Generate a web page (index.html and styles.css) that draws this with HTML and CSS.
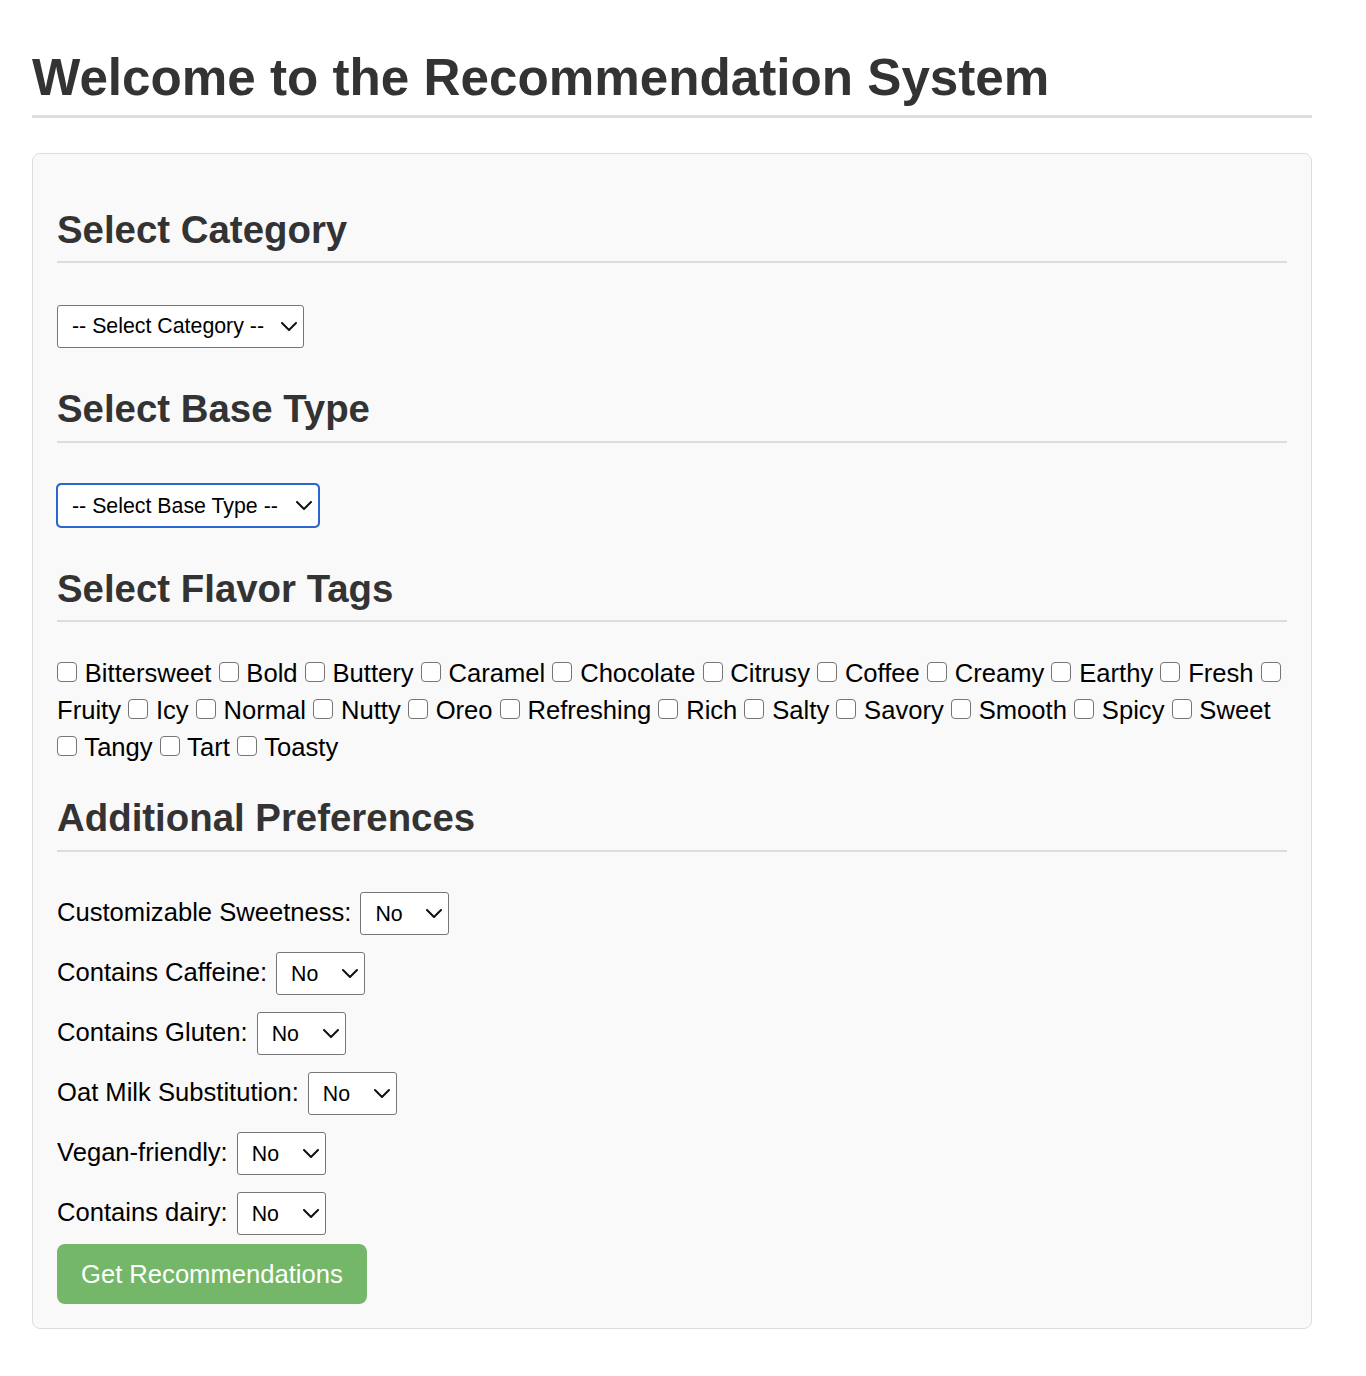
FILE: index.html
```html
<!DOCTYPE html>
<html lang="en">
<head>
<meta charset="utf-8">
<title>Recommendation System</title>
<link rel="stylesheet" href="styles.css">
</head>
<body>
<main class="page">
<h1 class="title">Welcome to the Recommendation System</h1>
<form class="panel">
  <h2 class="section-title">Select Category</h2>
  <div class="field">
    <span class="select-wrap">
      <select class="select select-category"><option>-- Select Category --</option></select>
      <svg class="chevron" viewBox="0 0 16 9" aria-hidden="true"><polyline points="1,1 8,8 15,1"/></svg>
    </span>
  </div>

  <h2 class="section-title">Select Base Type</h2>
  <div class="field">
    <span class="select-wrap is-focused">
      <select class="select select-base"><option>-- Select Base Type --</option></select>
      <svg class="chevron" viewBox="0 0 16 9" aria-hidden="true"><polyline points="1,1 8,8 15,1"/></svg>
    </span>
  </div>

  <h2 class="section-title">Select Flavor Tags</h2>
  <div class="tags">
    <label class="tag"><input type="checkbox" class="check"> Bittersweet</label>
    <label class="tag"><input type="checkbox" class="check"> Bold</label>
    <label class="tag"><input type="checkbox" class="check"> Buttery</label>
    <label class="tag"><input type="checkbox" class="check"> Caramel</label>
    <label class="tag"><input type="checkbox" class="check"> Chocolate</label>
    <label class="tag"><input type="checkbox" class="check"> Citrusy</label>
    <label class="tag"><input type="checkbox" class="check"> Coffee</label>
    <label class="tag"><input type="checkbox" class="check"> Creamy</label>
    <label class="tag"><input type="checkbox" class="check"> Earthy</label>
    <label class="tag"><input type="checkbox" class="check"> Fresh</label>
    <label class="tag"><input type="checkbox" class="check"> Fruity</label>
    <label class="tag"><input type="checkbox" class="check"> Icy</label>
    <label class="tag"><input type="checkbox" class="check"> Normal</label>
    <label class="tag"><input type="checkbox" class="check"> Nutty</label>
    <label class="tag"><input type="checkbox" class="check"> Oreo</label>
    <label class="tag"><input type="checkbox" class="check"> Refreshing</label>
    <label class="tag"><input type="checkbox" class="check"> Rich</label>
    <label class="tag"><input type="checkbox" class="check"> Salty</label>
    <label class="tag"><input type="checkbox" class="check"> Savory</label>
    <label class="tag"><input type="checkbox" class="check"> Smooth</label>
    <label class="tag"><input type="checkbox" class="check"> Spicy</label>
    <label class="tag"><input type="checkbox" class="check"> Sweet</label>
    <label class="tag"><input type="checkbox" class="check"> Tangy</label>
    <label class="tag"><input type="checkbox" class="check"> Tart</label>
    <label class="tag"><input type="checkbox" class="check"> Toasty</label>
  </div>

  <h2 class="section-title">Additional Preferences</h2>
  <div class="pref">
    <label class="pref-label">Customizable Sweetness:</label>
    <span class="select-wrap">
      <select class="select select-yn"><option>No</option><option>Yes</option></select>
      <svg class="chevron" viewBox="0 0 16 9" aria-hidden="true"><polyline points="1,1 8,8 15,1"/></svg>
    </span>
  </div>
  <div class="pref">
    <label class="pref-label">Contains Caffeine:</label>
    <span class="select-wrap">
      <select class="select select-yn"><option>No</option><option>Yes</option></select>
      <svg class="chevron" viewBox="0 0 16 9" aria-hidden="true"><polyline points="1,1 8,8 15,1"/></svg>
    </span>
  </div>
  <div class="pref">
    <label class="pref-label">Contains Gluten:</label>
    <span class="select-wrap">
      <select class="select select-yn"><option>No</option><option>Yes</option></select>
      <svg class="chevron" viewBox="0 0 16 9" aria-hidden="true"><polyline points="1,1 8,8 15,1"/></svg>
    </span>
  </div>
  <div class="pref">
    <label class="pref-label">Oat Milk Substitution:</label>
    <span class="select-wrap">
      <select class="select select-yn"><option>No</option><option>Yes</option></select>
      <svg class="chevron" viewBox="0 0 16 9" aria-hidden="true"><polyline points="1,1 8,8 15,1"/></svg>
    </span>
  </div>
  <div class="pref">
    <label class="pref-label">Vegan-friendly:</label>
    <span class="select-wrap">
      <select class="select select-yn"><option>No</option><option>Yes</option></select>
      <svg class="chevron" viewBox="0 0 16 9" aria-hidden="true"><polyline points="1,1 8,8 15,1"/></svg>
    </span>
  </div>
  <div class="pref">
    <label class="pref-label">Contains dairy:</label>
    <span class="select-wrap">
      <select class="select select-yn"><option>No</option><option>Yes</option></select>
      <svg class="chevron" viewBox="0 0 16 9" aria-hidden="true"><polyline points="1,1 8,8 15,1"/></svg>
    </span>
  </div>

  <button type="button" class="submit">Get Recommendations</button>
</form>
</main>
</body>
</html>
```

FILE: styles.css
```css
html {
  background: #ffffff;
}

body {
  margin: 0;
  padding: 13.5px 32px 40px;
  background: #ffffff;
  font-family: Arial, "Liberation Sans", Helvetica, sans-serif;
  font-size: 25.6px;
  color: #000;
}

.page {
  display: block;
  max-width: 1280px;
}

.title {
  margin: 34.3px 0 35px;
  padding-bottom: 8px;
  border-bottom: 3px solid #ddd;
  font-size: 51.2px;
  font-weight: bold;
  line-height: normal;
  color: #333;
}

.panel {
  margin: 0;
  padding: 24px;
  background: #f9f9f9;
  border: 1px solid #ddd;
  border-radius: 8px;
}

.section-title {
  margin: 30px 0 32px;
  padding-bottom: 9.5px;
  border-bottom: 2px solid #ddd;
  font-size: 38.4px;
  font-weight: bold;
  line-height: normal;
  color: #333;
}

.field {
  display: flex;
}

.select-wrap {
  position: relative;
  display: inline-block;
  margin: 9.5px 0;
}

.select {
  -webkit-appearance: none;
  appearance: none;
  display: block;
  box-sizing: border-box;
  height: 43px;
  margin: 0;
  padding: 0 30px 0 14px;
  background: #fff;
  border: 1px solid #767676;
  border-radius: 3px;
  font-family: Arial, "Liberation Sans", Helvetica, sans-serif;
  font-size: 21.33px;
  color: #000;
  outline: none;
}

.select-category {
  width: 247px;
}

.select-base {
  width: 262px;
}

.select-yn {
  width: 89px;
}

.is-focused .select {
  outline: 2px solid #2a67d3;
  outline-offset: -1px;
  border-radius: 4px;
}

.chevron {
  position: absolute;
  right: 7px;
  top: 50%;
  width: 16px;
  height: 9px;
  margin-top: -4.5px;
  fill: none;
  stroke: #111;
  stroke-width: 2;
  stroke-linecap: round;
  stroke-linejoin: round;
  pointer-events: none;
}

.tags {
  margin-top: 33px;
  line-height: 37px;
}

.check {
  -webkit-appearance: none;
  appearance: none;
  box-sizing: border-box;
  width: 20px;
  height: 20px;
  margin: 0 0.7px 0 0;
  vertical-align: baseline;
  background: #fff;
  border: 1px solid #767676;
  border-radius: 4px;
}

.pref {
  display: flex;
  align-items: baseline;
  gap: 9px;
}

.pref .select-wrap {
  margin: 8.5px 0;
}

.pref-label {
  line-height: normal;
}

.submit {
  display: block;
  margin: 0;
  padding: 16px 24px;
  background: #75b768;
  border: none;
  border-radius: 8px;
  font-family: Arial, "Liberation Sans", Helvetica, sans-serif;
  font-size: 25.6px;
  line-height: 28px;
  color: #fff;
  cursor: pointer;
}
```
